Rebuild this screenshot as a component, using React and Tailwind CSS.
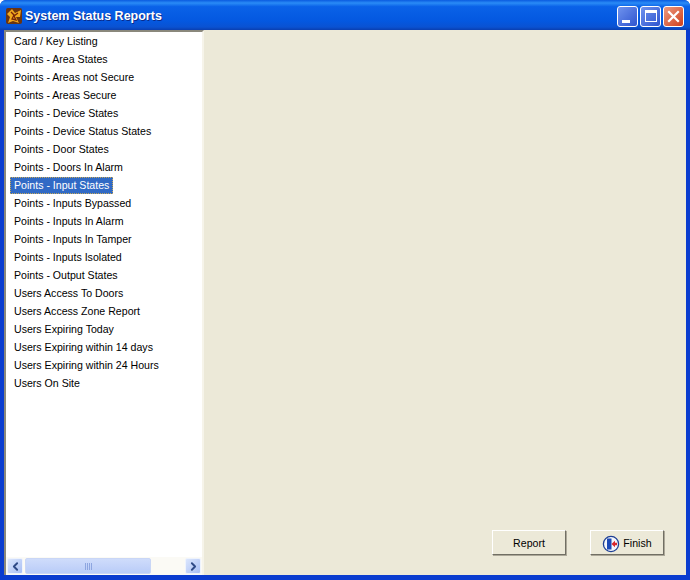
import React from 'react';
import { ChevronLeft, ChevronRight } from 'lucide-react';

const REPORTS = [
  'Card / Key Listing',
  'Points - Area States',
  'Points - Areas not Secure',
  'Points - Areas Secure',
  'Points - Device States',
  'Points - Device Status States',
  'Points - Door States',
  'Points - Doors In Alarm',
  'Points - Input States',
  'Points - Inputs Bypassed',
  'Points - Inputs In Alarm',
  'Points - Inputs In Tamper',
  'Points - Inputs Isolated',
  'Points - Output States',
  'Users Access To Doors',
  'Users Access Zone Report',
  'Users Expiring Today',
  'Users Expiring within 14 days',
  'Users Expiring within 24 Hours',
  'Users On Site',
];

const SELECTED = 'Points - Input States';

const AppIcon = () => (
  <svg width="16" height="16" viewBox="0 0 16 16" className="shrink-0">
    <rect width="16" height="16" rx="2" fill="#6b3410" />
    <path d="M1 6 L6 1 L9 5 L15 2 L14 9 L10 9 L13 15 L7 13 L2 15 L4 9 Z" fill="#f2a91e" />
    <path d="M5 4 L8 7 L6 11 L10 12 L8 8 L12 5" stroke="#7a2408" strokeWidth="1.3" fill="none" />
  </svg>
);

const FinishIcon = () => (
  <svg width="18" height="18" viewBox="0 0 18 18" className="shrink-0">
    <circle cx="9" cy="9" r="7.6" fill="#f4f6fb" stroke="#1d3f94" strokeWidth="1.3" />
    <rect x="5" y="3.5" width="4.5" height="11" fill="#1b49b8" />
    <path d="M9.5 9 L13 5.8 V7.8 H15 V10.2 H13 V12.2 Z" fill="#d8262c" />
  </svg>
);

const WinButton = ({ className, children }) => (
  <div className={`w-[21px] h-[21px] rounded-[3px] border border-white flex items-center justify-center relative ${className}`}>
    {children}
  </div>
);

const ScrollArrow = ({ children }) => (
  <div className="w-[16px] h-[16px] rounded-[2px] border border-[#eef3fd] bg-[linear-gradient(135deg,#dbe6fd,#a9bff4)] flex items-center justify-center text-[#2f4a86]">
    {children}
  </div>
);

const Button = ({ children }) => (
  <button className="w-[74px] h-[25px] pt-[2px] flex items-center justify-center gap-[3px] bg-[#ece9d8] text-[10.6px] text-black border border-t-white border-l-white border-r-[#716f64] border-b-[#716f64] shadow-[1px_1px_0_#aca899]">
    {children}
  </button>
);

export default function App() {
  return (
    <div className="w-[690px] h-[580px] bg-[#0a3ccf] flex flex-col overflow-hidden rounded-t-[6px] font-['Liberation_Sans',sans-serif]">
      <div className="h-[30px] shrink-0 pt-[2px] pl-[6px] pr-[6px] flex items-center gap-[3px] bg-[linear-gradient(180deg,#0a5be0_0%,#2a8cf6_10%,#0a62e8_22%,#0458e0_70%,#0a52d2_90%,#0a3fb0_100%)]">
        <AppIcon />
        <span className="text-white font-bold text-[12.5px] leading-none [text-shadow:1px_1px_0_#0a2a8a] flex-1">System Status Reports</span>
        <div className="flex items-center gap-[2px]">
          <WinButton className="bg-[linear-gradient(135deg,#6f93ee,#2f55cf)]">
            <span className="absolute left-[4px] bottom-[3px] w-[8px] h-[3px] bg-white"></span>
          </WinButton>
          <WinButton className="bg-[linear-gradient(135deg,#6f93ee,#2f55cf)]">
            <span className="w-[12px] h-[12px] border border-white border-t-[3px]"></span>
          </WinButton>
          <WinButton className="bg-[linear-gradient(135deg,#ec9a80,#cf3f1c)]">
            <svg width="13" height="13" viewBox="0 0 13 13">
              <path d="M2 2 L11 11 M11 2 L2 11" stroke="#fff" strokeWidth="2.2" strokeLinecap="square" />
            </svg>
          </WinButton>
        </div>
      </div>

      <div className="flex-1 min-h-0 mx-[4px] mb-[5px] mt-0 bg-[#ece9d8] flex">
        <div className="w-[200px] shrink-0 flex flex-col bg-white border-t-2 border-l-2 border-t-[#8a887c] border-l-[#8a887c] border-r-2 border-r-[#f6f4ea] border-b-0">
          <ul className="flex-1 pl-[4px] pt-[1px]">
            {REPORTS.map((name) => (
              <li key={name} className="h-[18px] flex items-start text-[10.6px] text-black">
                <span className={`h-[17px] flex items-center px-[4px] ${name === SELECTED ? 'bg-[#316ac5] text-white outline-1 outline-dotted outline-[#c6a85a] -outline-offset-1' : ''}`}>
                  {name}
                </span>
              </li>
            ))}
          </ul>
          <div className="h-[18px] shrink-0 flex items-center bg-[#fbfaf5] pl-[1px] pr-[1px]">
            <ScrollArrow><ChevronLeft size={13} strokeWidth={3.5} /></ScrollArrow>
            <div className="w-[126px] h-[16px] ml-[2px] rounded-[2px] border border-[#c9d6f6] bg-[linear-gradient(180deg,#cfdcfb,#b9ccf8)] flex items-center justify-center">
              <span className="flex gap-[1px]">
                <i className="w-px h-[7px] bg-[#8ea6e0]"></i>
                <i className="w-px h-[7px] bg-[#8ea6e0]"></i>
                <i className="w-px h-[7px] bg-[#8ea6e0]"></i>
                <i className="w-px h-[7px] bg-[#8ea6e0]"></i>
              </span>
            </div>
            <div className="flex-1"></div>
            <ScrollArrow><ChevronRight size={13} strokeWidth={3.5} /></ScrollArrow>
          </div>
        </div>

        <div className="flex-1 flex items-end justify-end gap-[24px] pr-[22px] pb-[20px]">
          <Button>Report</Button>
          <Button><FinishIcon />Finish</Button>
        </div>
      </div>
    </div>
  );
}
